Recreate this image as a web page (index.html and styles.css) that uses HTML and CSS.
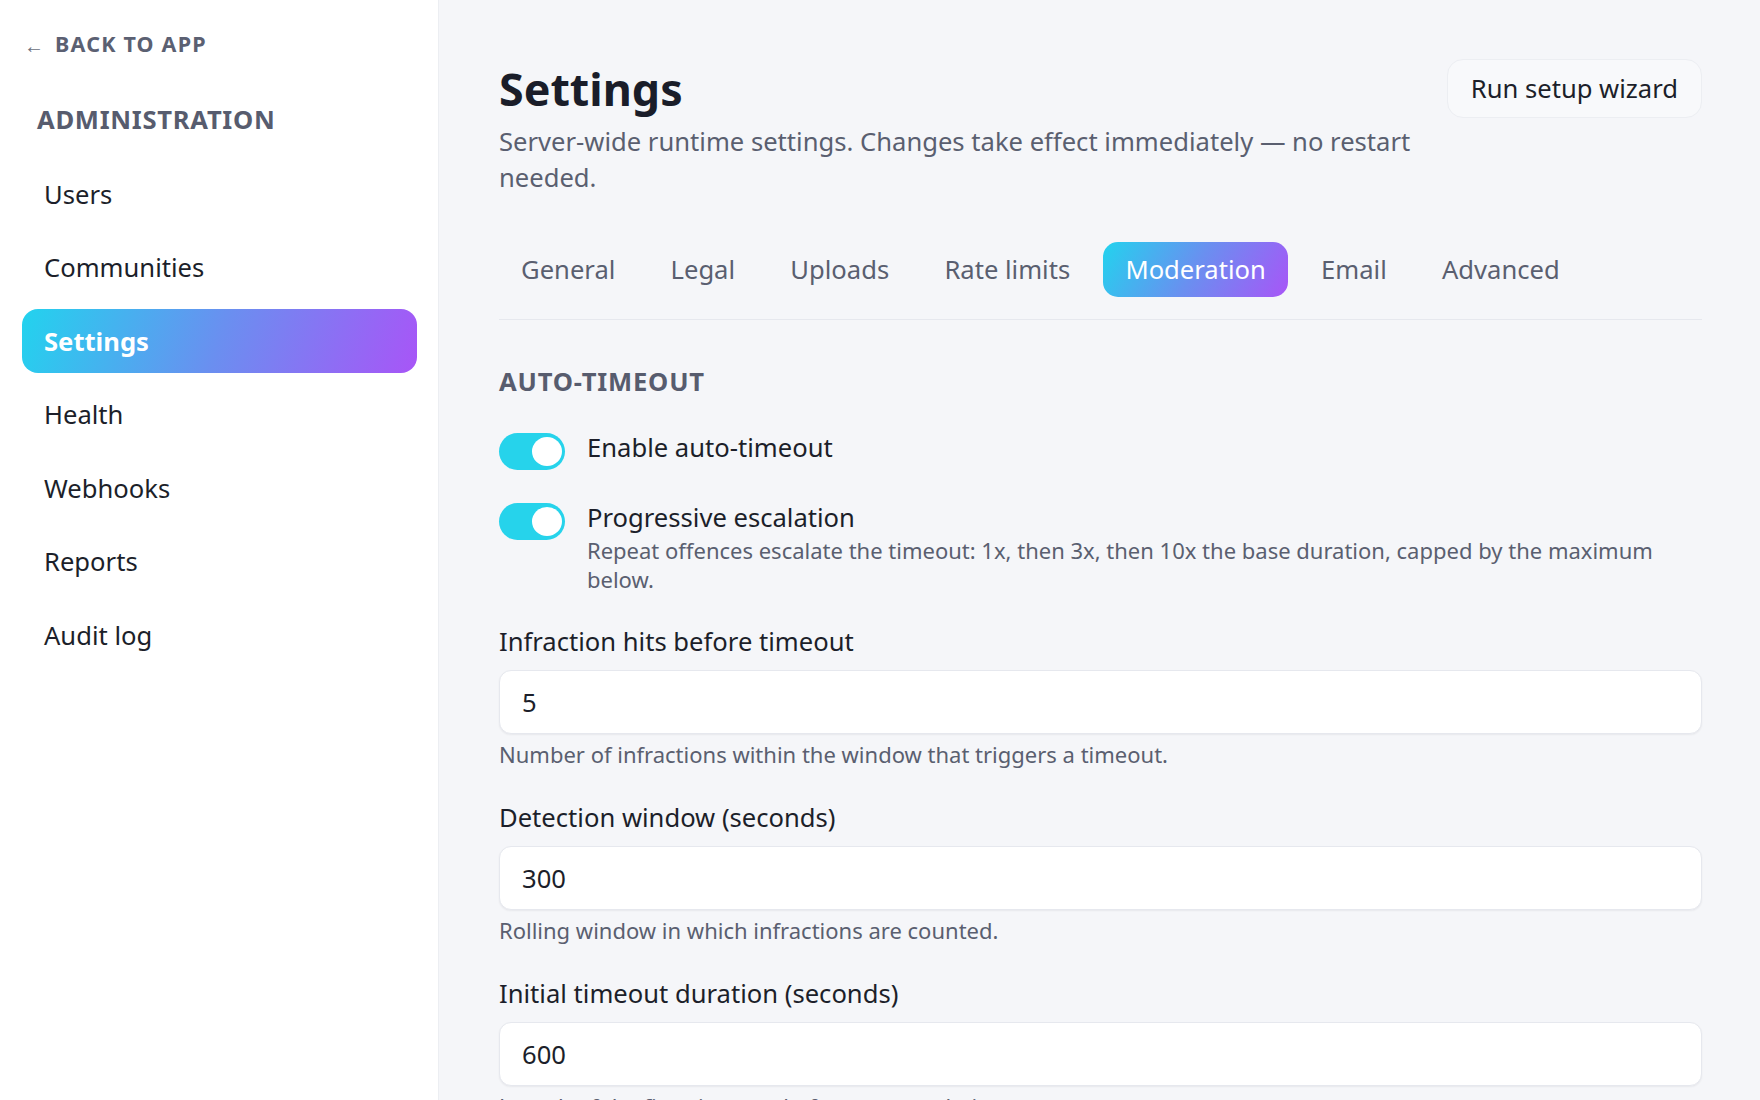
FILE: index.html
```html
<!DOCTYPE html>
<html>
<head>
    <meta charset="utf-8">
    <title>Settings</title>
    <link rel="stylesheet" href="styles.css">
</head>
<body>
    <aside class="sidebar">
        <a class="back" href="#"><span class="back-arrow">&larr;</span>Back to app</a>
        <h2 class="side-title">Administration</h2>
        <nav class="nav">
            <a class="nav-item" href="#">Users</a>
            <a class="nav-item" href="#">Communities</a>
            <a class="nav-item active" href="#">Settings</a>
            <a class="nav-item" href="#">Health</a>
            <a class="nav-item" href="#">Webhooks</a>
            <a class="nav-item" href="#">Reports</a>
            <a class="nav-item" href="#">Audit log</a>
        </nav>
    </aside>

    <main class="main">
        <div class="header">
            <div class="header-text">
                <h1>Settings</h1>
                <p class="subtitle">Server-wide runtime settings. Changes take effect immediately — no restart needed.</p>
            </div>
            <button class="btn-wizard">Run setup wizard</button>
        </div>

        <div class="tabs">
            <button class="tab">General</button>
            <button class="tab">Legal</button>
            <button class="tab">Uploads</button>
            <button class="tab">Rate limits</button>
            <button class="tab active">Moderation</button>
            <button class="tab">Email</button>
            <button class="tab">Advanced</button>
        </div>

        <section class="section">
            <h3 class="section-title">Auto-timeout</h3>

            <div class="toggle-row">
                <span class="toggle on"><span class="knob"></span></span>
                <div class="toggle-text">
                    <div class="toggle-label">Enable auto-timeout</div>
                </div>
            </div>

            <div class="toggle-row">
                <span class="toggle on"><span class="knob"></span></span>
                <div class="toggle-text">
                    <div class="toggle-label">Progressive escalation</div>
                    <div class="toggle-desc">Repeat offences escalate the timeout: 1x, then 3x, then 10x the base duration, capped by the maximum below.</div>
                </div>
            </div>

            <div class="field">
                <label class="field-label">Infraction hits before timeout</label>
                <input class="input" type="text" value="5">
                <div class="hint">Number of infractions within the window that triggers a timeout.</div>
            </div>

            <div class="field">
                <label class="field-label">Detection window (seconds)</label>
                <input class="input" type="text" value="300">
                <div class="hint">Rolling window in which infractions are counted.</div>
            </div>

            <div class="field">
                <label class="field-label">Initial timeout duration (seconds)</label>
                <input class="input" type="text" value="600">
                <div class="hint">Length of the first timeout, before any escalation.</div>
            </div>
        </section>
    </main>
</body>
</html>
```

FILE: styles.css
```css
*{
    box-sizing: border-box;
}
html, body{
    height: 100%;
}
body{
    margin: 0;
    display: flex;
    overflow: hidden;
    font-family: "Noto Sans", "Open Sans", sans-serif;
    color: #1c1f2a;
    background-color: #f5f6f9;
}

/* sidebar */
.sidebar{
    width: 439px;
    flex-shrink: 0;
    padding: 28px 21px 0 22px;
    background-color: #ffffff;
    border-right: 1px solid #eceef2;
}
.back{
    display: flex;
    align-items: center;
    padding-left: 2px;
    height: 30px;
    font-size: 21.5px;
    font-weight: bold;
    letter-spacing: 1.2px;
    text-transform: uppercase;
    color: #5b6072;
    text-decoration: none;
}
.back-arrow{
    font-size: 20px;
    font-weight: normal;
    letter-spacing: 0;
    margin-right: 11px;
    margin-top: 5px;
    color: #6b7080;
}
.side-title{
    margin: 44px 0 24px 15px;
    font-size: 25.6px;
    line-height: 36px;
    font-weight: bold;
    letter-spacing: 0.7px;
    text-transform: uppercase;
    color: #575c6e;
}
.nav{
    display: flex;
    flex-direction: column;
    gap: 9.6px;
}
.nav-item{
    display: flex;
    align-items: center;
    height: 64px;
    padding: 0 22px;
    border-radius: 16px;
    font-size: 25.6px;
    color: #1c1f2a;
    text-decoration: none;
}
.nav-item.active{
    font-weight: bold;
    color: #ffffff;
    background: linear-gradient(110deg, #22d3ee 0%, #6a8ff0 50%, #a855f7 100%);
}

/* main */
.main{
    flex: 1;
    padding: 58px 58px 0 60px;
}
.header{
    display: flex;
    align-items: flex-start;
    gap: 30px;
}
.header-text{
    flex: 1;
}
h1{
    margin: 0;
    font-size: 44.8px;
    line-height: 62px;
    font-weight: bold;
    color: #1a1d29;
}
.subtitle{
    margin: 4px 0 0 0;
    font-size: 25.6px;
    line-height: 36px;
    color: #5a5f70;
}
.btn-wizard{
    margin-top: 1px;
    height: 59px;
    padding: 0 23px;
    font-family: inherit;
    font-size: 25.6px;
    color: #1c1f2a;
    background-color: #f8f9fb;
    border: 1px solid #eceef2;
    border-radius: 16px;
    cursor: pointer;
}

.tabs{
    display: flex;
    gap: 11.2px;
    margin-top: 46px;
    padding-bottom: 22px;
    border-bottom: 1px solid #e6e8ee;
}
.tab{
    height: 55px;
    padding: 0 22px;
    font-family: inherit;
    font-size: 25.6px;
    color: #5a5f70;
    background: none;
    border: none;
    border-radius: 15px;
    cursor: pointer;
}
.tab.active{
    color: #ffffff;
    background: linear-gradient(120deg, #22d3ee 0%, #6a8ff0 50%, #a855f7 100%);
}

.section{
    padding-top: 44px;
}
.section-title{
    margin: 0 0 30px 0;
    font-size: 25.6px;
    line-height: 36px;
    font-weight: bold;
    letter-spacing: 0.8px;
    text-transform: uppercase;
    color: #575c6e;
}

.toggle-row{
    display: flex;
    align-items: flex-start;
    gap: 22px;
    margin-bottom: 30px;
}
.toggle{
    position: relative;
    flex-shrink: 0;
    width: 66px;
    height: 37px;
    margin-top: 3px;
    border-radius: 19px;
    background-color: #d1d5db;
}
.toggle.on{
    background-color: #26d3eb;
}
.knob{
    position: absolute;
    top: 4px;
    right: 3px;
    width: 30px;
    height: 29px;
    border-radius: 50%;
    background-color: #ffffff;
}
.toggle-label{
    font-size: 25.6px;
    line-height: 36px;
    color: #1c1f2a;
}
.toggle-desc{
    font-size: 22px;
    line-height: 29px;
    color: #5a5f70;
}

.field{
    margin-bottom: 30px;
}
.field-label{
    display: block;
    margin-bottom: 10px;
    font-size: 25.6px;
    line-height: 36px;
    color: #1c1f2a;
}
.input{
    display: block;
    width: 100%;
    height: 64px;
    padding: 0 22px;
    font-family: inherit;
    font-size: 25.6px;
    color: #1c1f2a;
    background-color: #ffffff;
    border: 1px solid #e6e8ee;
    border-radius: 12px;
    box-shadow: 0 1px 2px rgba(20, 24, 40, 0.06);
    outline: none;
}
.hint{
    margin-top: 5px;
    font-size: 22px;
    line-height: 31px;
    color: #5a5f70;
}
```
